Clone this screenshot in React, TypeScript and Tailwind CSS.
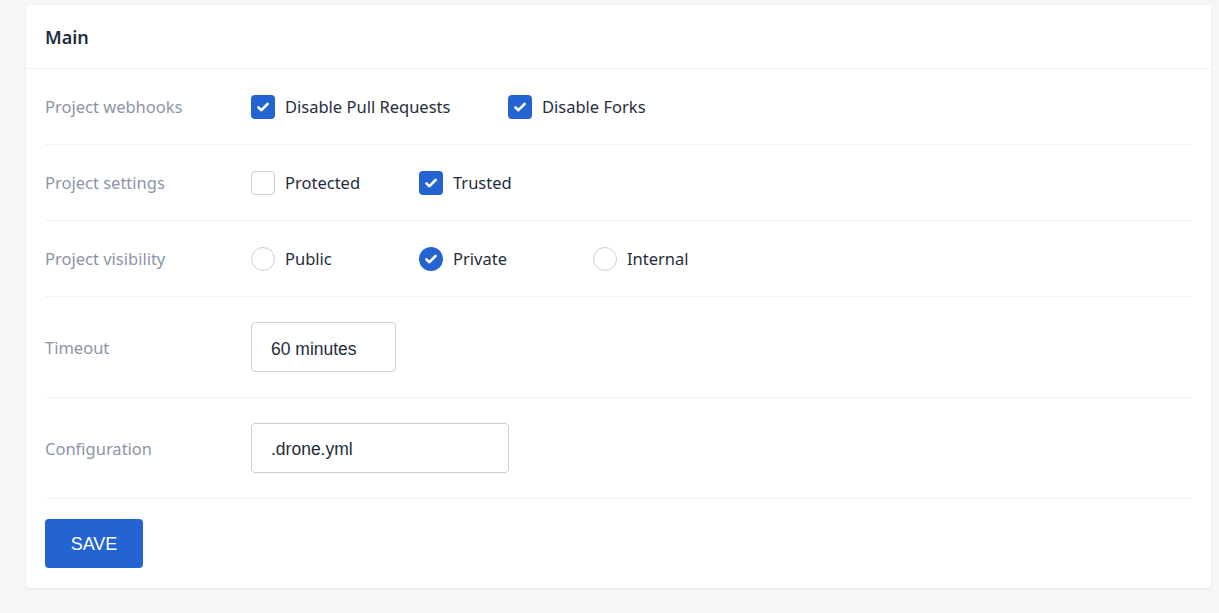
import React from 'react';

const blue = 'bg-[#2364d2]';

function Tick() {
  return (
    <svg viewBox="0 0 16 16" className="h-4 w-4" fill="none" stroke="white" strokeWidth="2.6" strokeLinecap="round" strokeLinejoin="round">
      <path d="M3.4 8.4l3 2.8 6.2-6.2" />
    </svg>
  );
}

function Check({ on }: { on: boolean }) {
  return on ? (
    <span className={`flex h-6 w-6 items-center justify-center rounded ${blue}`}>
      <Tick />
    </span>
  ) : (
    <span className="h-6 w-6 rounded border border-[#c9ced8] bg-white" />
  );
}

function Radio({ on }: { on: boolean }) {
  return on ? (
    <span className={`flex h-6 w-6 items-center justify-center rounded-full ${blue}`}>
      <Tick />
    </span>
  ) : (
    <span className="h-6 w-6 rounded-full border border-[#c9ced8] bg-white" />
  );
}

function Option({ label, on, radio, width }: { label: string; on: boolean; radio?: boolean; width?: string }) {
  return (
    <div className={`flex items-center gap-2.5 ${width ?? ''}`}>
      {radio ? <Radio on={on} /> : <Check on={on} />}
      <span className="pt-0.5 text-[16.5px] text-[#1f2d3d]">{label}</span>
    </div>
  );
}

function Row({ label, children, h }: { label: string; children: React.ReactNode; h: string }) {
  return (
    <div className={`flex items-center border-b border-[#eef0f3] ${h}`}>
      <div className="w-[206px] pt-0.5 text-[16.5px] text-[#8a95a8]">{label}</div>
      <div className="flex items-center">{children}</div>
    </div>
  );
}

export default function App() {
  return (
    <div className="min-h-screen bg-[#f5f6f8] pt-[5px] pl-[26px] pr-2" style={{ fontFamily: '"Noto Sans", sans-serif' }}>
      <div className="rounded bg-white shadow-[0_1px_3px_rgba(0,0,0,0.06)]">
        <div className="flex h-[64px] items-center border-b border-[#eef0f3] px-[19px]">
          <h2 className="text-lg font-semibold text-[#1f2d3d]">Main</h2>
        </div>
        <div className="px-[19px] pb-5">
          <Row label="Project webhooks" h="h-[76px]">
            <Option label="Disable Pull Requests" on width="w-[257px]" />
            <Option label="Disable Forks" on />
          </Row>
          <Row label="Project settings" h="h-[76px]">
            <Option label="Protected" on={false} width="w-[168px]" />
            <Option label="Trusted" on />
          </Row>
          <Row label="Project visibility" h="h-[76px]">
            <Option label="Public" on={false} radio width="w-[168px]" />
            <Option label="Private" on radio width="w-[174px]" />
            <Option label="Internal" on={false} radio />
          </Row>
          <Row label="Timeout" h="h-[101px]">
            <input
              readOnly
              value="60 minutes"
              className="h-[50px] w-[145px] rounded border border-[#c9ced8] px-[19px] pt-1 text-[17.5px] text-[#1f2d3d] outline-none"
              style={{ fontFamily: '"Liberation Sans", Arial, sans-serif' }}
            />
          </Row>
          <Row label="Configuration" h="h-[101px]">
            <input
              readOnly
              value=".drone.yml"
              className="h-[50px] w-[258px] rounded border border-[#c9ced8] px-[19px] pt-0.5 text-[17.5px] text-[#1f2d3d] outline-none"
              style={{ fontFamily: '"Liberation Sans", Arial, sans-serif' }}
            />
          </Row>
          <div className="pt-5">
            <button
              className={`h-[49px] w-[98px] rounded ${blue} text-lg text-white`}
              style={{ fontFamily: '"Liberation Sans", Arial, sans-serif' }}
            >
              SAVE
            </button>
          </div>
        </div>
      </div>
    </div>
  );
}
